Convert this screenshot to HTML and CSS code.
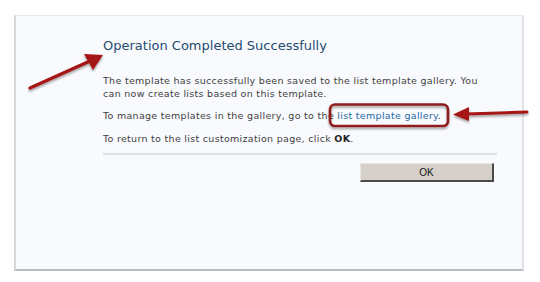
FILE: index.html
```html
<!DOCTYPE html>
<html>
<head>
<meta charset="utf-8">
<link rel="stylesheet" href="styles.css">
</head>
<body>
<div class="stage">
  <div class="panel">
    <h1 class="title">Operation Completed Successfully</h1>
    <p class="msg">The template has successfully been saved to the list template gallery. You can now create lists based on this template.</p>
    <p class="msg">To manage templates in the gallery, go to the <a class="link" href="#">list template gallery</a>.</p>
    <p class="msg">To return to the list customization page, click <b>OK</b>.</p>
    <div class="rule"></div>
    <div class="actions"><button class="ok">OK</button></div>
  </div>
  <svg class="marks" width="540" height="282" viewBox="0 0 540 282">
    <defs>
      <filter id="sh" x="-20%" y="-20%" width="140%" height="160%">
        <feDropShadow dx="0" dy="2" stdDeviation="1.2" flood-color="#000" flood-opacity="0.35"/>
      </filter>
    </defs>
    <g filter="url(#sh)">
      <line x1="30" y1="88" x2="90" y2="61" stroke="#a51313" stroke-width="3.2" stroke-linecap="round"/>
      <polygon points="103,55 84,54 93,70" fill="#a51313"/>
      <line x1="527" y1="112" x2="466" y2="114" stroke="#a51313" stroke-width="3" stroke-linecap="round"/>
      <polygon points="453,114.5 469,107 469,121" fill="#a51313"/>
      <rect x="330" y="104.5" width="118" height="21.5" rx="5" ry="5" fill="none" stroke="#8e1a1a" stroke-width="2.6"/>
    </g>
  </svg>
</div>
</body>
</html>
```
FILE: styles.css
```css
html, body {
  margin: 0;
  padding: 0;
  background: #ffffff;
}
.stage {
  position: relative;
  width: 540px;
  height: 282px;
  padding: 15px 0 0 14px;
  box-sizing: border-box;
}
.panel {
  width: 510px;
  height: 256px;
  box-sizing: border-box;
  background: #f9fafd;
  border-top: 1px solid #e6e9ee;
  border-right: 2px solid #dfe3e8;
  border-left: 2px solid #d4d7dc;
  border-bottom: 2px solid #b9bcc0;
  padding: 21px 27px 0 87px;
  font-family: "DejaVu Sans", Verdana, sans-serif;
}
.title {
  margin: 0;
  font-size: 13px;
  font-weight: normal;
  color: #1e4a70;
  line-height: 18px;
}
.msg {
  margin: 20px 0 0 0;
  font-size: 9.5px;
  letter-spacing: 0.3px;
  line-height: 12.5px;
  color: #3f3f3f;
  width: 382px;
}
.msg + .msg {
  margin-top: 10px;
}
.msg b {
  color: #222;
}
.link {
  color: #1f6aa8;
  text-decoration: none;
}
.rule {
  margin-top: 8px;
  height: 2px;
  width: 394px;
  background: #dedfe2;
}
.actions {
  display: flex;
  justify-content: flex-end;
  width: 391px;
  margin-top: 8px;
}
.ok {
  width: 134px;
  height: 19px;
  padding: 0;
  background: #d5d0c9;
  border: none;
  border-top: 1px solid #e8e5e0;
  border-left: 1px solid #e8e5e0;
  border-right: 2px solid #4a4a4a;
  border-bottom: 2px solid #4a4a4a;
  font-family: "Liberation Sans", Arial, sans-serif;
  font-size: 10px;
  color: #111;
}
.marks {
  position: absolute;
  left: 0;
  top: 0;
  pointer-events: none;
}
```
